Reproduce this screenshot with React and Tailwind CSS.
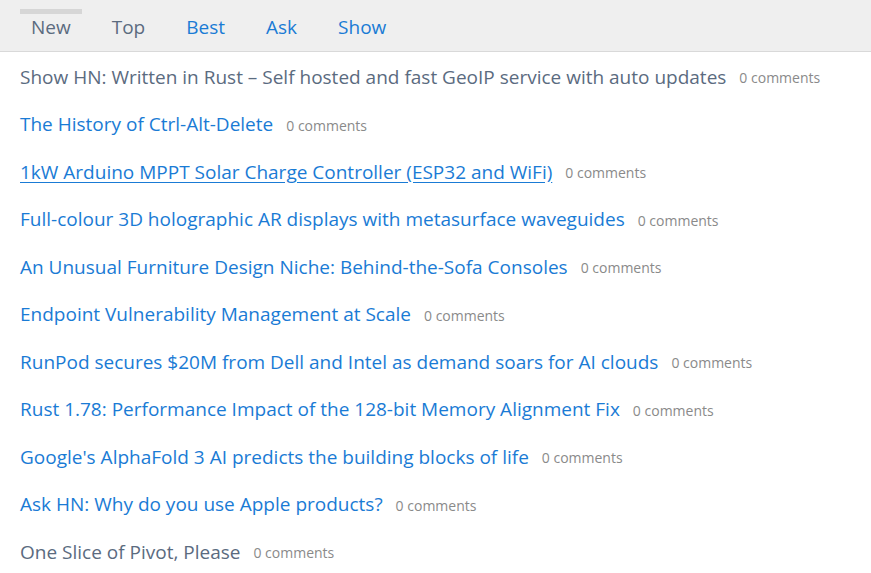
const tabs = [
  { label: "New", active: true },
  { label: "Top", muted: true },
  { label: "Best" },
  { label: "Ask" },
  { label: "Show" },
];

const stories = [
  { title: "Show HN: Written in Rust – Self hosted and fast GeoIP service with auto updates", visited: true },
  { title: "The History of Ctrl-Alt-Delete" },
  { title: "1kW Arduino MPPT Solar Charge Controller (ESP32 and WiFi)", hover: true },
  { title: "Full-colour 3D holographic AR displays with metasurface waveguides" },
  { title: "An Unusual Furniture Design Niche: Behind-the-Sofa Consoles" },
  { title: "Endpoint Vulnerability Management at Scale" },
  { title: "RunPod secures $20M from Dell and Intel as demand soars for AI clouds" },
  { title: "Rust 1.78: Performance Impact of the 128-bit Memory Alignment Fix" },
  { title: "Google's AlphaFold 3 AI predicts the building blocks of life" },
  { title: "Ask HN: Why do you use Apple products?" },
  { title: "One Slice of Pivot, Please", visited: true },
];

export default function App() {
  return (
    <div className="min-h-screen bg-white font-['Open_Sans',sans-serif]">
      {/* Tabs */}
      <nav className="h-[52px] bg-[#efefef] border-b border-[#d9d9d9] flex items-stretch px-[20px] gap-[19px]">
        {tabs.map((t) => (
          <a
            key={t.label}
            href="#"
            className={
              "relative flex items-center px-[11px] text-[19px] " +
              (t.active || t.muted ? "text-[#5b6b7f]" : "text-[#1a7bd5]")
            }
          >
            {t.active && <span className="absolute left-0 right-0 top-[9px] h-[5px] bg-[#d6d6d6]" />}
            <span className="pt-[3px]">{t.label}</span>
          </a>
        ))}
      </nav>

      {/* Stories */}
      <ul className="px-[20px]">
        {stories.map((s) => (
          <li key={s.title} className="h-[47.5px] flex items-center gap-[13px] pt-[2px]">
            <a
              href="#"
              className={
                "text-[19px] " +
                (s.visited ? "text-[#5b6b7f]" : "text-[#1a7bd5]") +
                (s.hover ? " underline underline-offset-[3px]" : "")
              }
            >
              {s.title}
            </a>
            <span className="text-[14px] text-[#8a8a8a] pt-[2px]">0 comments</span>
          </li>
        ))}
      </ul>
    </div>
  );
}
